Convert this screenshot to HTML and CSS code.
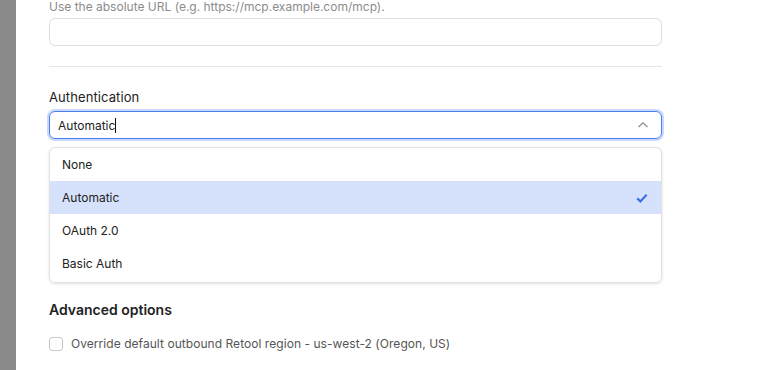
FILE: index.html
```html
<!DOCTYPE html>
<html>

<head>
    <title>MCP server settings</title>
    <link rel="stylesheet" href="styles.css">
</head>

<body>
    <div class="backdrop"></div>
    <div class="panel">
        <div class="form">
            <p class="hint">Use the absolute URL (e.g. https://mcp.example.com/mcp).</p>
            <input type="text" class="text-input">

            <hr class="divider">

            <label class="field-label">Authentication</label>
            <div class="select">
                <span class="select-value">Automatic<span class="caret"></span></span>
                <svg class="chevron" width="14" height="14" viewBox="0 0 14 14">
                    <path d="M2.5 9 L7 4.8 L11.5 9" fill="none" stroke="#8a8a8a" stroke-width="1.2" />
                </svg>
            </div>

            <ul class="menu">
                <li class="menu-item">None</li>
                <li class="menu-item selected">
                    Automatic
                    <svg class="check" width="14" height="14" viewBox="0 0 14 14">
                        <path d="M2.2 7.4 L5.4 10.4 L11.6 3.8" fill="none" stroke="#3b6ff0" stroke-width="2.2" />
                    </svg>
                </li>
                <li class="menu-item">OAuth 2.0</li>
                <li class="menu-item">Basic Auth</li>
            </ul>

            <h3 class="section-title">Advanced options</h3>
            <label class="checkbox-row">
                <span class="checkbox"></span>
                Override default outbound Retool region - us-west-2 (Oregon, US)
            </label>
        </div>
    </div>
</body>

</html>
```

FILE: styles.css
```css
body {
    font-family: Inter, "Noto Sans", sans-serif;
    margin: 0;
    height: 100vh;
    display: flex;
    background-color: #fff;
    overflow: hidden;
}

.backdrop {
    width: 16px;
    background-color: #898989;
    flex-shrink: 0;
}

.panel {
    flex: 1;
    padding-left: 33px;
}

.form {
    width: 613px;
    display: flex;
    flex-direction: column;
}

.hint {
    margin: 0;
    font-size: 12px;
    line-height: 13px;
    color: #8c8c8c;
}

.text-input {
    margin-top: 5px;
    height: 28px;
    box-sizing: border-box;
    border: 1px solid #dedede;
    border-radius: 6px;
    outline: none;
}

.divider {
    margin: 20px 0 0 0;
    border: none;
    border-top: 1px solid #e6e6e6;
}

.field-label {
    margin-top: 21px;
    font-size: 13px;
    line-height: 18px;
    letter-spacing: 0.1px;
    color: #222;
}

.select {
    margin-top: 5px;
    height: 28px;
    box-sizing: border-box;
    border: 1px solid #4a7cf2;
    border-radius: 6px;
    box-shadow: 0 0 0 2px #c9d8fb;
    display: flex;
    align-items: center;
    justify-content: space-between;
    padding: 0 8px 0 8px;
}

.select-value {
    font-size: 12px;
    color: #222;
    display: flex;
    align-items: center;
}

.caret {
    display: inline-block;
    width: 1px;
    height: 15px;
    background-color: #111;
}

.chevron {
    margin-right: 3px;
}

.menu {
    list-style: none;
    margin: 8px 0 0 0;
    padding: 0 0 2px 0;
    border: 1px solid #e2e2e2;
    border-radius: 6px;
    box-shadow: 0 1px 3px rgba(0, 0, 0, 0.12);
    overflow: hidden;
}

.menu-item {
    height: 33px;
    display: flex;
    align-items: center;
    justify-content: space-between;
    padding: 0 12px 0 12px;
    font-size: 12px;
    color: #222;
}

.menu-item.selected {
    background-color: #d6e2fb;
}

.section-title {
    margin: 18px 0 0 0;
    font-size: 14px;
    line-height: 18px;
    font-weight: 600;
    color: #222;
}

.checkbox-row {
    margin-top: 17px;
    display: flex;
    align-items: center;
    gap: 8px;
    font-size: 12px;
    letter-spacing: 0.05px;
    color: #555;
}

.checkbox {
    width: 12px;
    height: 12px;
    border: 1px solid #c8c8c8;
    border-radius: 3px;
}
```
